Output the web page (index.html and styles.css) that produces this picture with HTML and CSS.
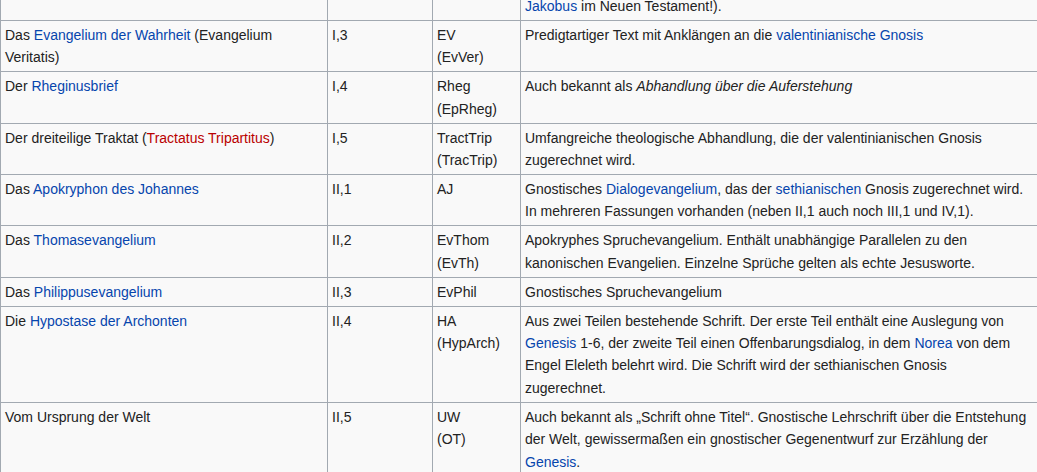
FILE: index.html
```html
<!DOCTYPE html>
<html lang="de">
<head>
<meta charset="utf-8">
<title>Nag-Hammadi-Schriften</title>
<link rel="stylesheet" href="styles.css">
</head>
<body>
<table class="wikitable">
  <colgroup>
    <col class="c-title">
    <col class="c-codex">
    <col class="c-abbr">
    <col class="c-desc">
  </colgroup>
  <tbody>
    <tr>
      <td></td>
      <td></td>
      <td></td>
      <td><a href="#">Jakobus</a> im Neuen Testament!).</td>
    </tr>
    <tr>
      <td>Das <a href="#">Evangelium der Wahrheit</a> (Evangelium Veritatis)</td>
      <td>I,3</td>
      <td>EV<br>(EvVer)</td>
      <td>Predigtartiger Text mit Anklängen an die <a href="#">valentinianische Gnosis</a></td>
    </tr>
    <tr>
      <td>Der <a href="#">Rheginusbrief</a></td>
      <td>I,4</td>
      <td>Rheg<br>(EpRheg)</td>
      <td>Auch bekannt als <i>Abhandlung über die Auferstehung</i></td>
    </tr>
    <tr>
      <td>Der dreiteilige Traktat (<a href="#" class="new">Tractatus Tripartitus</a>)</td>
      <td>I,5</td>
      <td>TractTrip<br>(TracTrip)</td>
      <td>Umfangreiche theologische Abhandlung, die der valentinianischen Gnosis<br>zugerechnet wird.</td>
    </tr>
    <tr>
      <td>Das <a href="#">Apokryphon des Johannes</a></td>
      <td>II,1</td>
      <td>AJ</td>
      <td>Gnostisches <a href="#">Dialogevangelium</a>, das der <a href="#">sethianischen</a> Gnosis zugerechnet wird.<br>In mehreren Fassungen vorhanden (neben II,1 auch noch III,1 und IV,1).</td>
    </tr>
    <tr>
      <td>Das <a href="#">Thomasevangelium</a></td>
      <td>II,2</td>
      <td>EvThom<br>(EvTh)</td>
      <td>Apokryphes Spruchevangelium. Enthält unabhängige Parallelen zu den<br>kanonischen Evangelien. Einzelne Sprüche gelten als echte Jesusworte.</td>
    </tr>
    <tr>
      <td>Das <a href="#">Philippusevangelium</a></td>
      <td>II,3</td>
      <td>EvPhil</td>
      <td>Gnostisches Spruchevangelium</td>
    </tr>
    <tr>
      <td>Die <a href="#">Hypostase der Archonten</a></td>
      <td>II,4</td>
      <td>HA<br>(HypArch)</td>
      <td>Aus zwei Teilen bestehende Schrift. Der erste Teil enthält eine Auslegung von<br><a href="#">Genesis</a> 1-6, der zweite Teil einen Offenbarungsdialog, in dem <a href="#">Norea</a> von dem<br>Engel Eleleth belehrt wird. Die Schrift wird der sethianischen Gnosis<br>zugerechnet.</td>
    </tr>
    <tr>
      <td>Vom Ursprung der Welt</td>
      <td>II,5</td>
      <td>UW<br>(OT)</td>
      <td>Auch bekannt als „Schrift ohne Titel“. Gnostische Lehrschrift über die Entstehung<br>der Welt, gewissermaßen ein gnostischer Gegenentwurf zur Erzählung der<br><a href="#">Genesis</a>.</td>
    </tr>
  </tbody>
</table>
</body>
</html>
```

FILE: styles.css
```css
html {
  overflow: hidden;
  background: #ffffff;
}

body {
  margin: 0;
  font-family: "Liberation Sans", Arial, sans-serif;
  font-size: 14px;
  line-height: 1.6;
  color: #222222;
}

.wikitable {
  margin-top: -9px;
  border-collapse: collapse;
  table-layout: fixed;
  width: 1060px;
  background: #f9f9f9;
  border: 1px solid #a2a9b1;
}

.c-title { width: 327px; }
.c-codex { width: 105px; }
.c-abbr  { width: 88px; }
.c-desc  { width: 540px; }

.wikitable td {
  border: 1px solid #a2a9b1;
  padding: 2.8px 4px;
  vertical-align: top;
  white-space: nowrap;
}

.wikitable td:first-child {
  white-space: normal;
}

.wikitable a {
  color: #0645ad;
  text-decoration: none;
}

.wikitable a.new {
  color: #ba0000;
}
```
